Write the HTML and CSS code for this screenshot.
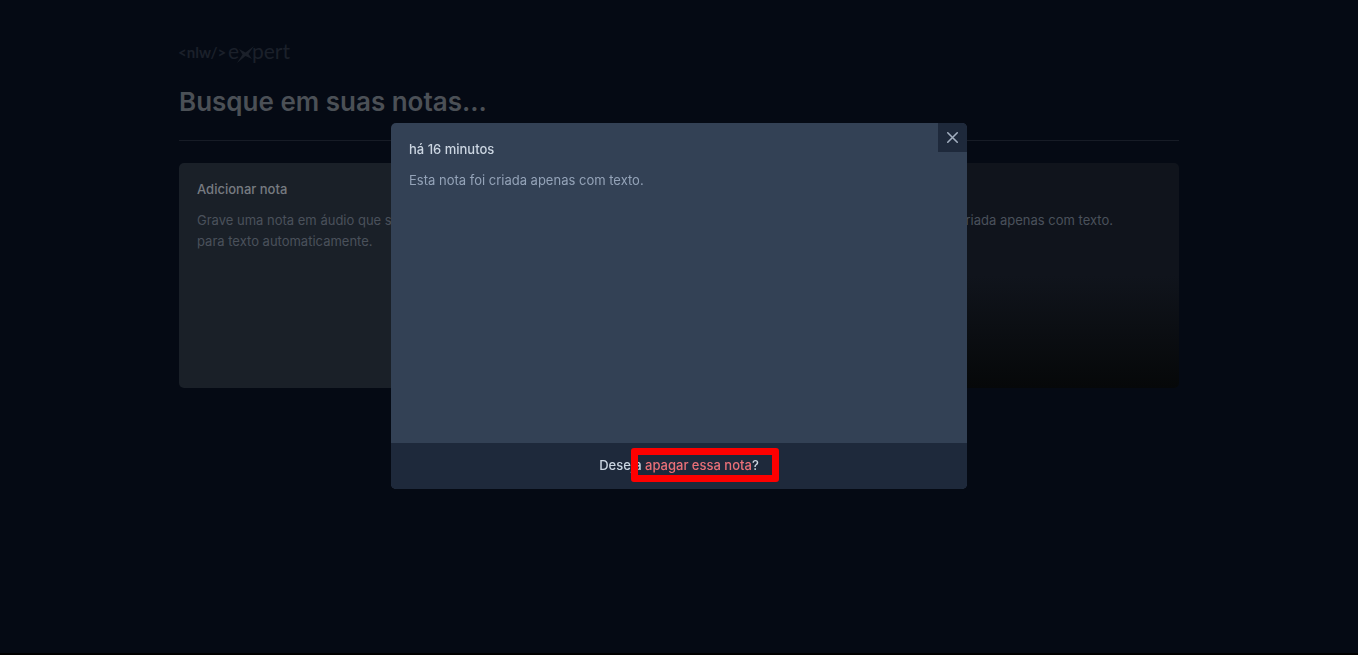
FILE: index.html
```html
<!DOCTYPE html>
<html lang="pt-BR">
<head>
<meta charset="utf-8">
<meta name="viewport" content="width=device-width, initial-scale=1">
<title>NLW Expert</title>
<link rel="stylesheet" href="styles.css">
</head>
<body>
<main class="page">
  <svg class="logo" viewBox="0 0 120 24" role="img" aria-label="nlw expert">
    <text class="logo-tag" x="-1" y="15">&lt;nlw/&gt;</text>
    <text class="logo-word" x="49" y="16">e</text>
    <path class="logo-star" d="M60 6 L66.500 9.500 L75 3 L69.500 11 L73 16 L66.500 13 L58 20 L63.500 11.500 Z"/>
    <text class="logo-word" x="73" y="16">pert</text>
  </svg>
  <form class="search">
    <input class="search-input" type="text" placeholder="Busque em suas notas..." aria-label="Busque em suas notas">
  </form>
  <hr class="divider">
  <div class="notes">
    <button class="card card-new" type="button">
      <span class="card-title">Adicionar nota</span>
      <span class="card-text">Grave uma nota em áudio que será<br>para texto automaticamente.</span>
    </button>
    <button class="card card-note" type="button">
      <span class="card-title">há 16 minutos</span>
      <span class="card-text">Esta nota foi criada apenas com texto.</span>
    </button>
  </div>
</main>
<div class="overlay">
  <section class="dialog" role="dialog" aria-modal="true" aria-labelledby="note-date">
    <button class="close" type="button" aria-label="Fechar">
      <svg class="close-icon" viewBox="0 0 24 24"><path d="M18 6 6 18M6 6l12 12"/></svg>
    </button>
    <div class="dialog-body">
      <h2 class="dialog-title" id="note-date">há 16 minutos</h2>
      <p class="dialog-text">Esta nota foi criada apenas com texto.</p>
    </div>
    <button class="delete" type="button">
      <span class="delete-label">Deseja <span class="delete-action">apagar essa nota</span>?<span class="highlight"></span></span>
    </button>
  </section>
</div>
</body>
</html>
```
FILE: styles.css
```css
* {
  box-sizing: border-box;
}

body {
  margin: 0;
  min-height: 100vh;
  background: #050a14;
  border-bottom: 2px solid #000;
  color: #777b81;
  font-family: Inter, "Liberation Sans", sans-serif;
  font-size: 13px;
  line-height: 16px;
}

button,
input {
  font: inherit;
  color: inherit;
  border: 0;
}

.page {
  max-width: 1000px;
  margin: 0 auto;
  padding: 43px 0;
}

.logo {
  display: block;
  width: 120px;
  height: 24px;
  overflow: visible;
  fill: #1b202a;
}

.logo-tag {
  font: 700 15px Lato, sans-serif;
}

.logo-word {
  font: 400 21px Lato, sans-serif;
}

.search {
  margin-top: 18px;
}

.search-input {
  display: block;
  width: 100%;
  height: 32px;
  padding: 0;
  background: transparent;
  outline: none;
  font-size: 26px;
  font-weight: 600;
}

.search-input::placeholder {
  color: #4b5056;
  opacity: 1;
}

.divider {
  height: 1px;
  margin: 23px 0 22px;
  border: 0;
  background: #171c26;
}

.notes {
  display: grid;
  grid-template-columns: repeat(3, 1fr);
  grid-auto-rows: 225px;
  gap: 22px;
}

.card {
  display: flex;
  flex-direction: column;
  gap: 13px;
  padding: 18px;
  border-radius: 5px;
  text-align: left;
}

.card-new {
  background: #1a2028;
}

.card-note {
  grid-column: 3;
  background: linear-gradient(#10141c 50%, #060809);
}

.card-title {
  font-weight: 500;
}

.card-text {
  color: #4a515b;
  line-height: 21px;
}

.overlay {
  position: fixed;
  inset: 0;
  padding-top: 123px;
}

.dialog {
  position: relative;
  max-width: 576px;
  margin: 0 auto;
  border-radius: 5px;
  overflow: hidden;
  background: #334155;
}

.close {
  position: absolute;
  top: 0;
  right: 0;
  padding: 5px;
  background: #1e293b;
  color: #a3afc0;
}

.close-icon {
  display: block;
  width: 19px;
  height: 19px;
  fill: none;
  stroke: currentColor;
  stroke-width: 2;
  stroke-linecap: round;
}

.dialog-body {
  display: flex;
  flex-direction: column;
  gap: 13px;
  min-height: 320px;
  padding: 18px;
}

.dialog-title {
  margin: 0;
  color: #cbd5e1;
  font-size: 13px;
  font-weight: 500;
}

.dialog-text {
  margin: 0;
  color: #94a3b8;
  line-height: 21px;
}

.delete {
  display: block;
  width: 100%;
  padding: 14px 14px 16px;
  background: #1e293b;
  color: #cbd5e1;
  font-weight: 500;
}

.delete-label {
  position: relative;
}

.delete-action {
  color: #ea7078;
}

.highlight {
  position: absolute;
  inset: -9px -20px -9px 32px;
  border: 7px solid #fe0000;
  border-radius: 3px;
}
```
